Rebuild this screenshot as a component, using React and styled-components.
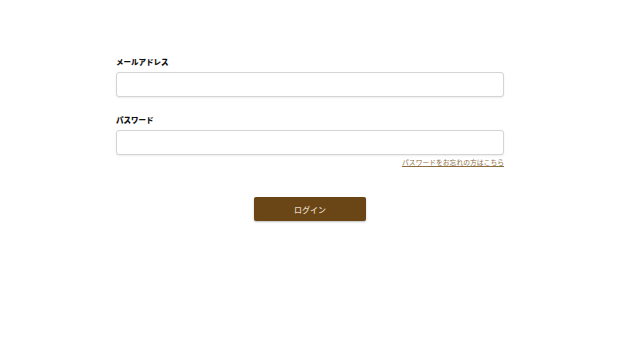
import React from "react";
import styled, { createGlobalStyle } from "styled-components";

const GlobalStyle = createGlobalStyle`
    body {
        margin: 0;
        background: #fff;
        font-family: "Noto Sans CJK JP", "Noto Sans", sans-serif;
    }
`;

const App = () => {
    return (
        <>
            <GlobalStyle />
            <Page>
                <Form>
                    <Field>
                        <Label>メールアドレス</Label>
                        <Input type="email" />
                    </Field>
                    <Field>
                        <Label>パスワード</Label>
                        <Input type="password" />
                        <ForgotLink href="#">パスワードをお忘れの方はこちら</ForgotLink>
                    </Field>
                    <SubmitRow>
                        <SubmitButton type="button">ログイン</SubmitButton>
                    </SubmitRow>
                </Form>
            </Page>
        </>
    );
};

const Page = styled.div`
    width: 620px;
    height: 343px;
    display: flex;
    justify-content: center;
`;

const Form = styled.form`
    width: 388px;
    padding-top: 57px;
    display: flex;
    flex-direction: column;
`;

const Field = styled.div`
    display: flex;
    flex-direction: column;
    margin-bottom: 18px;

    &:nth-child(2) {
        margin-bottom: 0;
    }
`;

const Label = styled.label`
    font-size: 7.5px;
    font-weight: 900;
    color: #111;
    line-height: 10px;
    margin-bottom: 5px;
`;

const Input = styled.input`
    box-sizing: border-box;
    width: 100%;
    height: 25px;
    border: 1px solid #d4d4d4;
    border-radius: 3px;
    box-shadow: 0 1px 2px rgba(0, 0, 0, 0.08);
    background: #fff;
    outline: none;
`;

const ForgotLink = styled.a`
    align-self: flex-end;
    margin-top: 2px;
    font-size: 6.8px;
    line-height: 10px;
    color: #8c6d40;
    text-decoration: underline;
`;

const SubmitRow = styled.div`
    display: flex;
    justify-content: center;
    margin-top: 30px;
`;

const SubmitButton = styled.button`
    width: 112px;
    height: 24px;
    border: none;
    border-radius: 2px;
    background: #6a4617;
    box-shadow: 0 1px 2px rgba(0, 0, 0, 0.25);
    color: #e6d8c4;
    font-family: "Noto Sans CJK JP", "Noto Sans", sans-serif;
    font-size: 8px;
    font-weight: 500;
    cursor: pointer;
`;

export default App;
